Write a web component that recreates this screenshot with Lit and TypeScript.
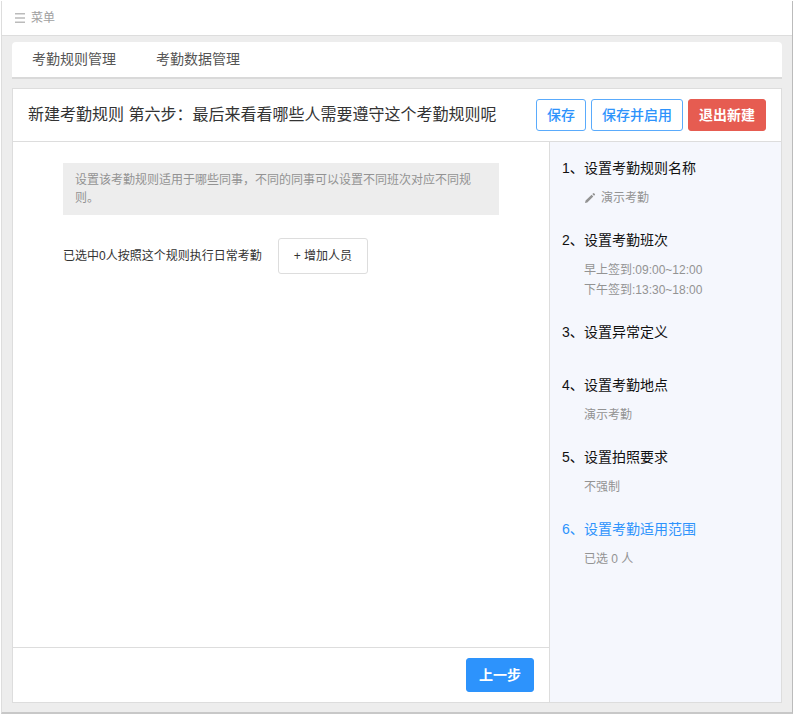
import { LitElement, html, css, svg, nothing } from "lit";
import { customElement, state } from "lit/decorators.js";
import { classMap } from "lit/directives/class-map.js";

interface Step {
  title: string;
  details: string[];
  editable?: boolean;
}

const STEPS: Step[] = [
  { title: "设置考勤规则名称", details: ["演示考勤"], editable: true },
  { title: "设置考勤班次", details: ["早上签到:09:00~12:00", "下午签到:13:30~18:00"] },
  { title: "设置异常定义", details: [] },
  { title: "设置考勤地点", details: ["演示考勤"] },
  { title: "设置拍照要求", details: ["不强制"] },
  { title: "设置考勤适用范围", details: ["已选 0 人"] },
];

const menuIcon = html`<svg class="menu-icon" viewBox="0 0 10 10" aria-hidden="true">
  ${svg`<path d="M0 .7h10M0 5h10M0 9.3h10" stroke="currentColor" stroke-width="1.4" fill="none" />`}
</svg>`;

const pencilIcon = html`<svg class="pencil" viewBox="0 0 12 12" aria-hidden="true">
  ${svg`<path d="M1 11l.6-2.400L7.600 2.800l1.700 1.700L3.300 10.400zM8.300 2.100l.9-.9q.4-.4.8 0l.9.900q.4.400 0 .8l-.9.900z" fill="currentColor" />`}
</svg>`;

@customElement("step-list")
export class StepList extends LitElement {
  static properties = { current: { type: Number } };
  declare current: number;

  static styles = css`
    :host {
      display: block;
    }
    ol {
      list-style: none;
      margin: 0;
      padding: 0;
    }
    .step {
      min-height: 53px;
      color: #111;
    }
    .title {
      display: flex;
      font-size: 14px;
      line-height: 20px;
    }
    .number {
      width: 22px;
      white-space: nowrap;
    }
    .details {
      padding: 10px 0 22px 22px;
      font-size: 12px;
      line-height: 20px;
      color: #939393;
    }
    .detail {
      display: flex;
      align-items: center;
    }
    .current .title {
      color: #2d93fc;
    }
    .pencil {
      width: 12px;
      height: 12px;
      margin-right: 5px;
    }
  `;

  render() {
    return html`<ol>
      ${STEPS.map(
        (step, i) => html`<li class=${classMap({ step: true, current: i + 1 === this.current })}>
          <div class="title"><span class="number">${i + 1}、</span><span>${step.title}</span></div>
          ${step.details.length
            ? html`<div class="details">
                ${step.details.map(
                  (d) => html`<div class="detail">${step.editable ? pencilIcon : nothing}${d}</div>`
                )}
              </div>`
            : nothing}
        </li>`
      )}
    </ol>`;
  }
}

@customElement("app-root")
export class AppRoot extends LitElement {
  @state() private selected = 0;

  static styles = css`
    :host {
      display: flex;
      flex-direction: column;
      box-sizing: border-box;
      min-height: 100vh;
      padding: 1px;
      background: #fff;
      font-family: "Liberation Sans", "Noto Sans CJK SC", sans-serif;
      color: #333;
    }
    * {
      box-sizing: border-box;
    }
    button {
      font-family: inherit;
      cursor: pointer;
      margin: 0;
    }
    .window {
      flex: 1;
      display: flex;
      flex-direction: column;
      background: #ededed;
      border-left: 1px solid #ddd;
      border-right: 1px solid #bbb;
      border-bottom: 2px solid #c8c8c8;
    }
    .topbar {
      height: 35px;
      display: flex;
      align-items: center;
      padding: 0 13px;
      background: #fff;
      border-bottom: 1px solid #ddd;
    }
    .menu {
      display: flex;
      align-items: center;
      gap: 6px;
      padding: 0;
      border: 0;
      background: none;
      color: #a0a0a0;
      font-size: 12px;
      line-height: 18px;
    }
    .menu-icon {
      width: 10px;
      height: 10px;
      color: #bbb;
    }
    .tabs {
      display: flex;
      gap: 40px;
      height: 37px;
      margin: 6px 10px 0;
      padding: 0 20px;
      background: #fff;
      border-bottom: 2px solid #d9d9d9;
      border-radius: 4px 4px 0 0;
    }
    .tab {
      font-size: 14px;
      line-height: 34px;
      color: #555;
      text-decoration: none;
    }
    .card {
      flex: 1;
      display: flex;
      flex-direction: column;
      margin: 9px 10px;
      background: #fff;
      border: 1px solid #ddd;
    }
    .card-header {
      display: flex;
      align-items: center;
      justify-content: space-between;
      padding: 10px 15px;
      border-bottom: 1px solid #ddd;
    }
    h1 {
      margin: 0;
      font-size: 16px;
      font-weight: 400;
      line-height: 32px;
      white-space: nowrap;
    }
    .actions {
      display: flex;
      gap: 5px;
    }
    .btn {
      height: 32px;
      padding: 0 10px;
      border: 1px solid #5aabfc;
      border-radius: 3px;
      background: #fff;
      color: #2d93fc;
      font-size: 14px;
      font-weight: 500;
      line-height: 20px;
      white-space: nowrap;
    }
    .danger {
      border-color: #e65c51;
      background: #e65c51;
      color: #fff;
      font-weight: 700;
    }
    .primary {
      height: 34px;
      padding: 0 12px;
      border-color: #2d93fc;
      background: #2d93fc;
      color: #fff;
      font-weight: 700;
    }
    .body {
      flex: 1;
      display: flex;
    }
    .main {
      flex: 1;
      display: flex;
      flex-direction: column;
    }
    .content {
      flex: 1;
      padding: 21px 50px;
    }
    .hint {
      margin: 0;
      padding: 8px 12px;
      background: #ededed;
      color: #939393;
      font-size: 12px;
      line-height: 18px;
    }
    .people {
      display: flex;
      align-items: center;
      gap: 16px;
      margin-top: 23px;
      font-size: 12px;
      line-height: 18px;
    }
    .add {
      height: 36px;
      padding: 0 15px;
      border: 1px solid #ddd;
      border-radius: 3px;
      background: #fff;
      color: #333;
      font-size: 12px;
      line-height: 18px;
    }
    .footer {
      display: flex;
      justify-content: flex-end;
      padding: 10px 15px;
      border-top: 1px solid #ddd;
    }
    .side {
      width: 232px;
      padding: 16px 12px;
      background: #f5f7fd;
      border-left: 1px solid #ddd;
    }
  `;

  render() {
    return html`<div class="window">
      <header class="topbar">
        <button class="menu">${menuIcon}<span>菜单</span></button>
      </header>
      <nav class="tabs">
        <a class="tab" href="#rules">考勤规则管理</a>
        <a class="tab" href="#data">考勤数据管理</a>
      </nav>
      <section class="card">
        <div class="card-header">
          <h1>新建考勤规则 第六步：最后来看看哪些人需要遵守这个考勤规则呢</h1>
          <div class="actions">
            <button class="btn">保存</button>
            <button class="btn">保存并启用</button>
            <button class="btn danger">退出新建</button>
          </div>
        </div>
        <div class="body">
          <main class="main">
            <div class="content">
              <p class="hint">设置该考勤规则适用于哪些同事，不同的同事可以设置不同班次对应不同规则。</p>
              <div class="people">
                <span>已选中${this.selected}人按照这个规则执行日常考勤</span>
                <button class="add">+ 增加人员</button>
              </div>
            </div>
            <div class="footer"><button class="btn primary">上一步</button></div>
          </main>
          <aside class="side"><step-list .current=${6}></step-list></aside>
        </div>
      </section>
    </div>`;
  }
}
